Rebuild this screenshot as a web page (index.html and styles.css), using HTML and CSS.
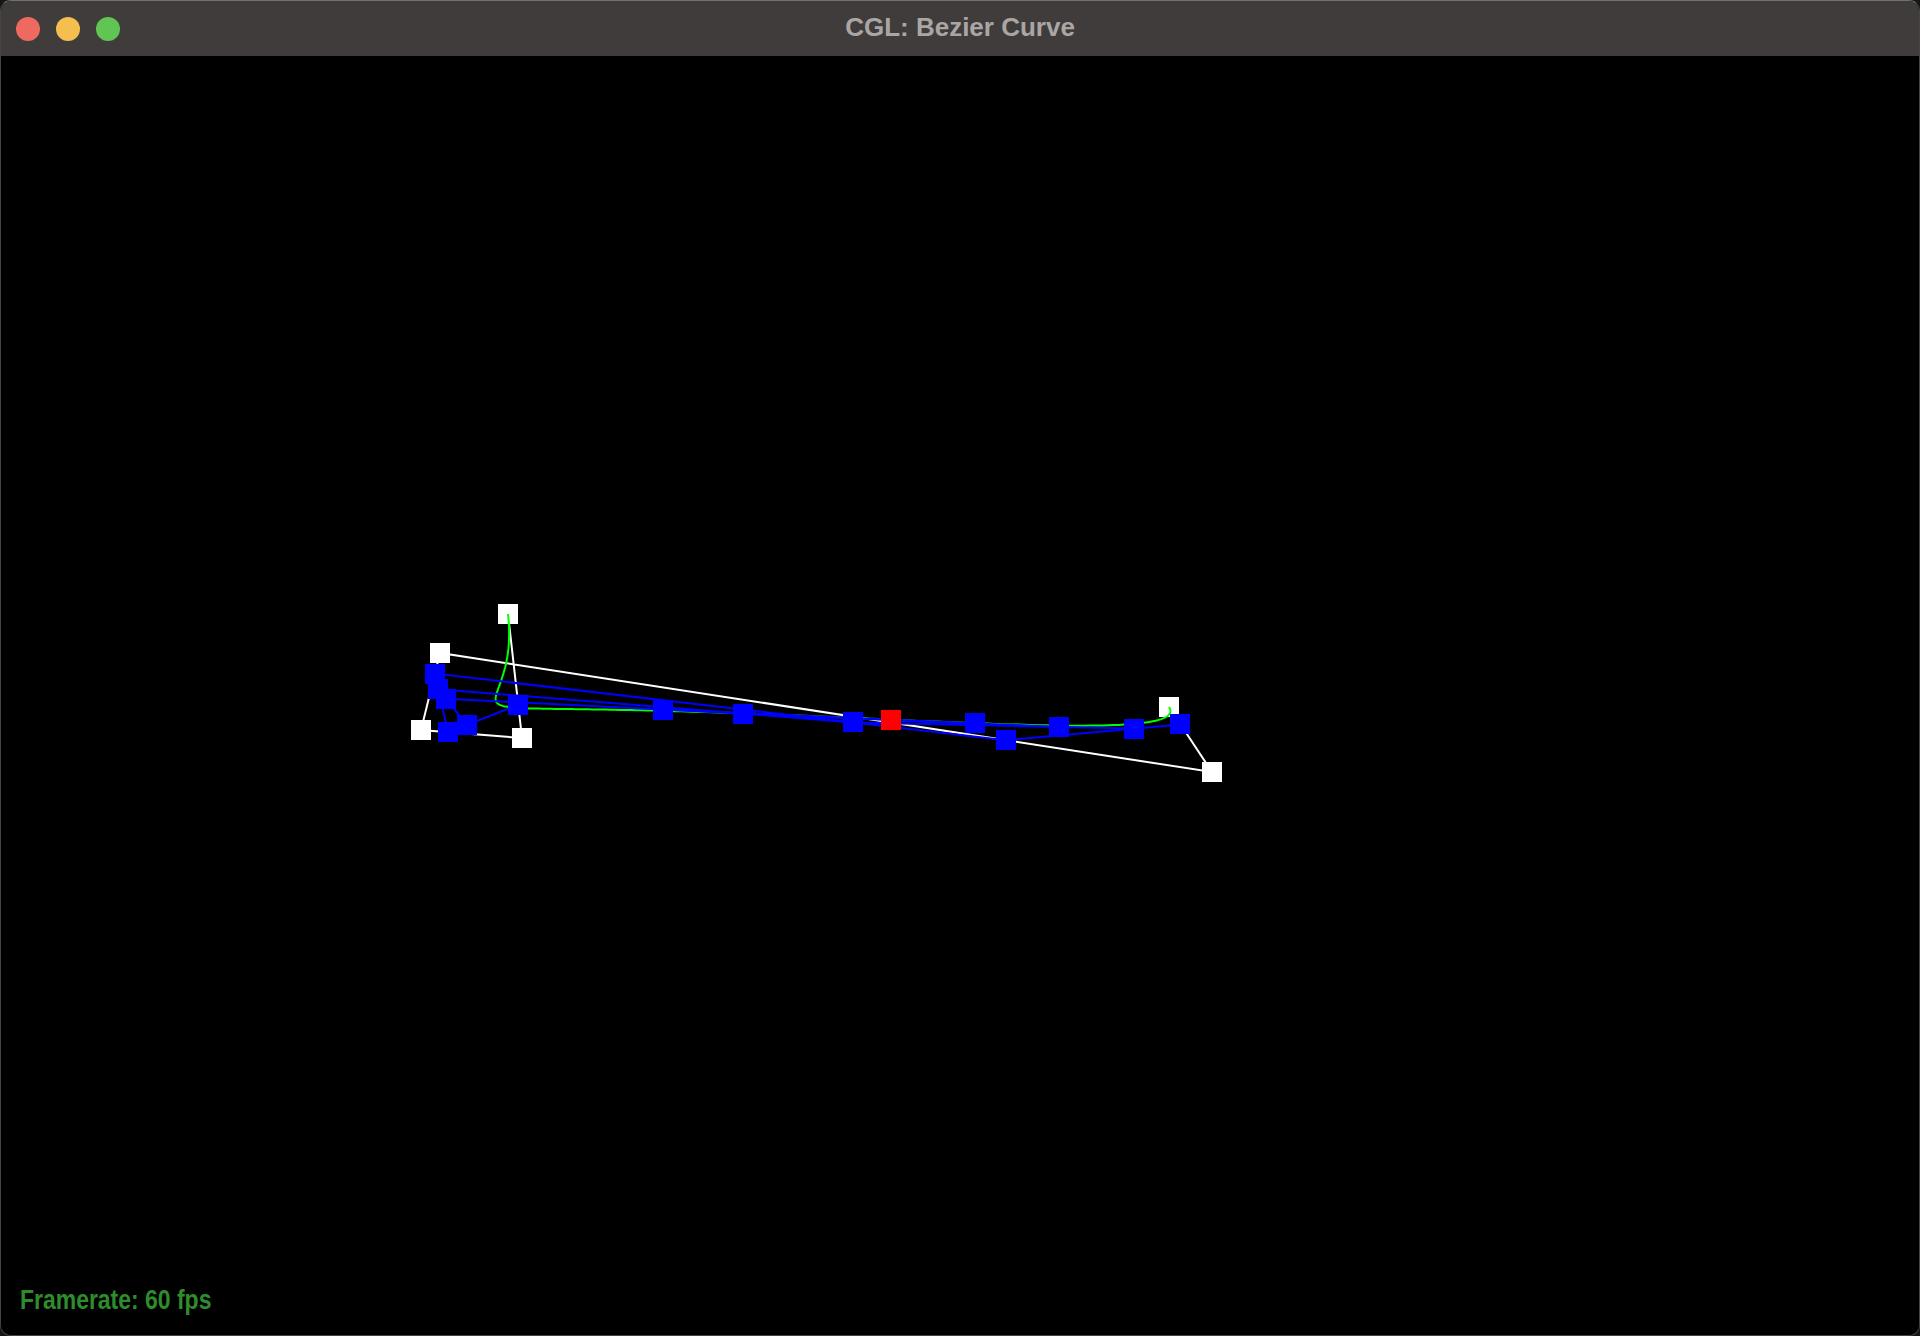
FILE: index.html
```html
<!DOCTYPE html>
<html lang="en">
<head>
<meta charset="utf-8">
<title>CGL: Bezier Curve</title>
<link rel="stylesheet" href="styles.css">
</head>
<body>
<div class="window">
  <header class="titlebar">
    <div class="lights">
      <span class="light light-close"></span>
      <span class="light light-min"></span>
      <span class="light light-max"></span>
    </div>
    <div class="title">CGL: Bezier Curve</div>
    <div class="spacer"></div>
  </header>
  <main class="viewport">
    <svg id="scene" class="scene" width="1918" height="1279" viewBox="1 56 1918 1279" xmlns="http://www.w3.org/2000/svg"></svg>
    <div class="fps">Framerate: 60 fps</div>
  </main>
</div>
<script src="script.js"></script>
</body>
</html>
```

FILE: styles.css
```css
* { box-sizing: border-box; }
html, body { margin: 0; padding: 0; }
body {
  background: #161616;
  width: 1920px;
  height: 1336px;
  overflow: hidden;
}
.window {
  width: 1920px;
  height: 1336px;
  border: 1px solid #444;
  border-top-color: #707070;
  border-radius: 11px;
  overflow: hidden;
  display: flex;
  flex-direction: column;
  background: #000;
}
.titlebar {
  height: 55px;
  flex: 0 0 55px;
  background: #403c3b;
  display: grid;
  grid-template-columns: 1fr auto 1fr;
  align-items: center;
}
.lights {
  display: flex;
  gap: 16px;
  padding-left: 15px;
  align-items: center;
}
.light {
  width: 24px;
  height: 24px;
  border-radius: 50%;
  display: block;
}
.light-close { background: #ee6a5f; }
.light-min { background: #f5bf4f; }
.light-max { background: #61c554; }
.title {
  font-family: "Liberation Sans", Arial, sans-serif;
  font-weight: bold;
  font-size: 26px;
  color: #aaa6a4;
  line-height: 55px;
  margin-top: -2px;
}
.viewport {
  flex: 1;
  position: relative;
  background: #000;
  overflow: hidden;
}
.scene {
  display: block;
}
.fps {
  position: absolute;
  left: 19px;
  bottom: 21px;
  font-family: "Liberation Sans", Arial, sans-serif;
  font-weight: bold;
  font-size: 28px;
  line-height: 1;
  color: #2f8c2c;
  transform: scaleX(0.82);
  transform-origin: left center;
  white-space: nowrap;
}
.ctrl-line { stroke: #ffffff; stroke-width: 2; fill: none; }
.curve { stroke: #00ff00; stroke-width: 2; fill: none; }
.blue-line { stroke: #0000ff; stroke-width: 2; fill: none; }
.ctrl-pt { fill: #ffffff; }
.mid-pt { fill: #0000ff; }
.eval-pt { fill: #ff0000; }
```

FILE: script.js
```js
(function () {
  var NS = "http://www.w3.org/2000/svg";
  var svg = document.getElementById("scene");
  var P = [[508, 614], [522, 738], [421, 730], [440, 653], [1212, 772], [1169, 707]];
  var T = 0.733;
  var S = 20;

  function el(name, attrs) {
    var e = document.createElementNS(NS, name);
    for (var k in attrs) e.setAttribute(k, attrs[k]);
    svg.appendChild(e);
    return e;
  }
  function lerp(a, b, t) { return [a[0] + (b[0] - a[0]) * t, a[1] + (b[1] - a[1]) * t]; }
  function levels(pts, t) {
    var out = [pts];
    var cur = pts;
    while (cur.length > 1) {
      var nx = [];
      for (var i = 0; i < cur.length - 1; i++) nx.push(lerp(cur[i], cur[i + 1], t));
      out.push(nx);
      cur = nx;
    }
    return out;
  }
  function poly(pts) {
    return pts.map(function (p) { return p[0].toFixed(1) + "," + p[1].toFixed(1); }).join(" ");
  }
  function square(p, cls) {
    el("rect", { x: Math.round(p[0] - S / 2), y: Math.round(p[1] - S / 2), width: S, height: S, "class": cls });
  }

  // control polygon
  el("polyline", { points: poly(P), "class": "ctrl-line" });
  P.forEach(function (p) { square(p, "ctrl-pt"); });

  // bezier curve
  var curve = [];
  for (var i = 0; i <= 200; i++) {
    var lv = levels(P, i / 200);
    curve.push(lv[lv.length - 1][0]);
  }
  el("polyline", { points: poly(curve), "class": "curve" });

  // de Casteljau intermediate levels
  var L = levels(P, T);
  for (var j = 1; j < L.length - 1; j++) {
    el("polyline", { points: poly(L[j]), "class": "blue-line" });
  }
  for (var j2 = 1; j2 < L.length - 1; j2++) {
    L[j2].forEach(function (p) { square(p, "mid-pt"); });
  }
  square(L[L.length - 1][0], "eval-pt");
})();
```
